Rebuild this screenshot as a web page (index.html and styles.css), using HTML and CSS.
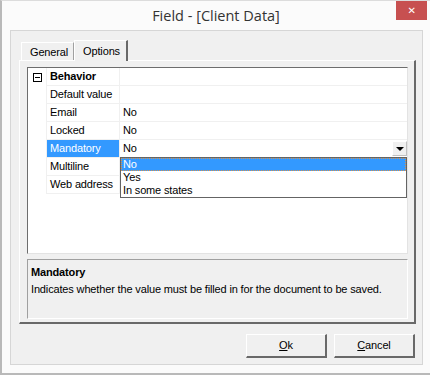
FILE: index.html
```html
<!DOCTYPE html>
<html lang="en">

<head>
    <meta charset="UTF-8">
    <title>Field - [Client Data]</title>
    <link rel="stylesheet" href="styles.css">
</head>

<body>
    <div class="window">
        <div class="titlebar">
            <div class="title-spacer"></div>
            <div class="title">Field - [Client Data]</div>
            <div class="close-btn">&#10005;</div>
        </div>

        <div class="client">
            <div class="tabs">
                <div class="tab">General</div>
                <div class="tab active">Options</div>
            </div>

            <div class="tab-panel">
                <div class="grid">
                    <div class="row category">
                        <div class="gutter"><span class="toggle"></span></div>
                        <div class="label">Behavior</div>
                        <div class="value"></div>
                    </div>
                    <div class="row">
                        <div class="gutter"></div>
                        <div class="label">Default value</div>
                        <div class="value"></div>
                    </div>
                    <div class="row">
                        <div class="gutter"></div>
                        <div class="label">Email</div>
                        <div class="value">No</div>
                    </div>
                    <div class="row">
                        <div class="gutter"></div>
                        <div class="label">Locked</div>
                        <div class="value">No</div>
                    </div>
                    <div class="row editing">
                        <div class="gutter"></div>
                        <div class="label selected">Mandatory</div>
                        <div class="value">
                            <span class="value-text">No</span>
                            <span class="drop-btn"><span class="arrow"></span></span>
                            <!-- open list of the combo -->
                            <div class="drop-list">
                                <div class="drop-item highlight">No</div>
                                <div class="drop-item">Yes</div>
                                <div class="drop-item">In some states</div>
                            </div>
                        </div>
                    </div>
                    <div class="row">
                        <div class="gutter"></div>
                        <div class="label">Multiline</div>
                        <div class="value"></div>
                    </div>
                    <div class="row">
                        <div class="gutter"></div>
                        <div class="label">Web address</div>
                        <div class="value"></div>
                    </div>
                </div>

                <div class="info">
                    <div class="info-title">Mandatory</div>
                    <div class="info-text">Indicates whether the value must be filled in for the document to be saved.</div>
                </div>
            </div>

            <div class="buttons">
                <div class="btn"><u>O</u>k</div>
                <div class="btn"><u>C</u>ancel</div>
            </div>
        </div>
    </div>
</body>

</html>
```

FILE: styles.css
```css
body {
    margin: 0;
    padding: 0;
    font-family: 'Liberation Sans', Arial, sans-serif;
    font-size: 11px;
    letter-spacing: -0.15px;
    color: #000;
    background: #fff;
}

.window {
    width: 428px;
    height: 372px;
    border-left: 2px solid #b9b9b9;
    border-bottom: 2px solid #b9b9b9;
    border-top: 1px solid #dcdcdc;
    background: #fbfbfb;
    overflow: hidden;
}

.titlebar {
    display: flex;
    height: 29px;
}

.title-spacer {
    width: 34px;
}

.title {
    flex: 1;
    text-align: center;
    font-family: 'Open Sans', sans-serif;
    font-size: 14.5px;
    letter-spacing: 0;
    color: #333;
    line-height: 29px;
}

.close-btn {
    width: 31px;
    height: 19px;
    margin-right: 3px;
    background: #c75050;
    color: #fff;
    font-family: 'DejaVu Sans', sans-serif;
    font-size: 10px;
    font-weight: bold;
    text-align: center;
    line-height: 19px;
}

.client {
    margin-left: 8px;
    width: 413px;
    height: 335px;
    border: 1px solid #d6d6d6;
    background: #f0f0f0;
    padding: 9px 7px 0 8px;
    box-sizing: border-box;
}

.tabs {
    display: flex;
    align-items: flex-end;
    height: 20px;
    padding-left: 2px;
}

.tab {
    height: 18px;
    padding: 0 5px 0 8px;
    line-height: 18px;
    border-top: 1px solid #fff;
    border-left: 1px solid #fff;
    border-right: 1px solid #a0a0a0;
    box-sizing: border-box;
    background: #f0f0f0;
}

.tab.active {
    height: 21px;
    margin-bottom: -1px;
    padding: 0 6px 0 8px;
    line-height: 20px;
    border-right: 2px solid #696969;
    position: relative;
    z-index: 1;
}

.tab-panel {
    width: 397px;
    height: 264px;
    box-sizing: border-box;
    border-top: 1px solid #fff;
    border-left: 1px solid #fff;
    border-right: 2px solid #696969;
    border-bottom: 2px solid #696969;
    padding: 6px 0 0 7px;
}

.grid {
    width: 381px;
    height: 187px;
    box-sizing: border-box;
    border-top: 1px solid #6d6d6d;
    border-left: 1px solid #6d6d6d;
    border-right: 1px solid #e3e3e3;
    border-bottom: 1px solid #e3e3e3;
    background: #fff;
}

.row {
    display: flex;
    height: 18px;
}

.gutter {
    width: 18px;
    border-right: 1px solid #f0f0f0;
    display: flex;
    align-items: center;
    justify-content: center;
}

.toggle {
    width: 7px;
    height: 7px;
    border: 1px solid #000;
    position: relative;
}

.toggle::after {
    content: '';
    position: absolute;
    left: 1px;
    top: 3px;
    width: 5px;
    height: 1px;
    background: #000;
}

.label {
    width: 73px;
    box-sizing: border-box;
    padding-left: 3px;
    line-height: 17px;
    border-bottom: 1px solid #f0f0f0;
    border-right: 1px solid #f0f0f0;
    white-space: nowrap;
    overflow: hidden;
}

.category .label {
    font-weight: bold;
}

.label.selected {
    background: #3399ff;
    color: #fff;
}

.value {
    flex: 1;
    padding-left: 3px;
    line-height: 17px;
    border-bottom: 1px solid #f0f0f0;
}

.editing .value {
    display: flex;
    position: relative;
}

.value-text {
    flex: 1;
}

.drop-btn {
    width: 15px;
    height: 15px;
    margin: 1px 0 0 0;
    background: #f0f0f0;
    border-top: 1px solid #fff;
    border-left: 1px solid #fff;
    border-right: 1px solid #c0c0c0;
    border-bottom: 1px solid #c0c0c0;
    box-sizing: border-box;
    display: flex;
    align-items: center;
    justify-content: center;
}

.arrow {
    width: 0;
    height: 0;
    border-left: 4px solid transparent;
    border-right: 4px solid transparent;
    border-top: 4px solid #000;
    margin-top: 1px;
}

.drop-list {
    position: absolute;
    left: 0;
    top: 17px;
    width: 287px;
    box-sizing: border-box;
    border: 1px solid #646464;
    background: #fff;
    z-index: 2;
}

.drop-item {
    height: 13px;
    line-height: 13px;
    padding-left: 2px;
}

.drop-item.highlight {
    background: #3399ff;
    color: #fff;
    outline: 1px dotted #d9924a;
    outline-offset: -1px;
}

.info {
    width: 381px;
    height: 60px;
    margin-top: 5px;
    box-sizing: border-box;
    border-top: 1px solid #a0a0a0;
    border-left: 1px solid #a0a0a0;
    border-right: 1px solid #fff;
    border-bottom: 1px solid #fff;
    padding: 5px 3px;
}

.info-title {
    font-weight: bold;
    line-height: 14px;
}

.info-text {
    margin-top: 3px;
    line-height: 14px;
}

.buttons {
    display: flex;
    justify-content: flex-end;
    gap: 7px;
    margin-top: 10px;
}

.btn {
    width: 81px;
    height: 24px;
    box-sizing: border-box;
    border-top: 1px solid #fff;
    border-left: 1px solid #fff;
    border-right: 2px solid #696969;
    border-bottom: 2px solid #696969;
    background: #f0f0f0;
    text-align: center;
    line-height: 21px;
}
```
